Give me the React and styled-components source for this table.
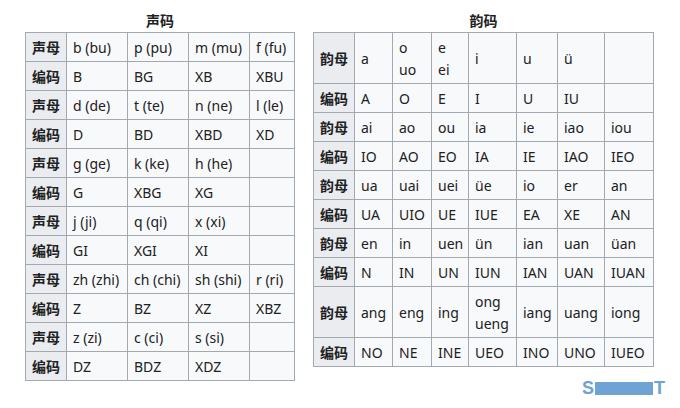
import React from "react";
import styled, { createGlobalStyle } from "styled-components";

const GlobalStyle = createGlobalStyle`
  html, body {
    margin: 0;
    padding: 0;
    background: #fff;
  }
  body {
    font-family: "Noto Sans", "Noto Sans CJK SC", sans-serif;
    color: #202122;
    font-size: 14px;
  }
`;

const shengRows = [
  ["b (bu)", "p (pu)", "m (mu)", "f (fu)"],
  ["B", "BG", "XB", "XBU"],
  ["d (de)", "t (te)", "n (ne)", "l (le)"],
  ["D", "BD", "XBD", "XD"],
  ["g (ge)", "k (ke)", "h (he)", ""],
  ["G", "XBG", "XG", ""],
  ["j (ji)", "q (qi)", "x (xi)", ""],
  ["GI", "XGI", "XI", ""],
  ["zh (zhi)", "ch (chi)", "sh (shi)", "r (ri)"],
  ["Z", "BZ", "XZ", "XBZ"],
  ["z (zi)", "c (ci)", "s (si)", ""],
  ["DZ", "BDZ", "XDZ", ""],
];

const yunRows = [
  ["a", ["o", "uo"], ["e", "ei"], "i", "u", "ü", ""],
  ["A", "O", "E", "I", "U", "IU", ""],
  ["ai", "ao", "ou", "ia", "ie", "iao", "iou"],
  ["IO", "AO", "EO", "IA", "IE", "IAO", "IEO"],
  ["ua", "uai", "uei", "üe", "io", "er", "an"],
  ["UA", "UIO", "UE", "IUE", "EA", "XE", "AN"],
  ["en", "in", "uen", "ün", "ian", "uan", "üan"],
  ["N", "IN", "UN", "IUN", "IAN", "UAN", "IUAN"],
  ["ang", "eng", "ing", ["ong", "ueng"], "iang", "uang", "iong"],
  ["NO", "NE", "INE", "UEO", "INO", "UNO", "IUEO"],
];

const Page = styled.div`
  position: relative;
  width: 680px;
  height: 408px;
  box-sizing: border-box;
  padding: 10px 0 0 25px;
  display: flex;
  align-items: flex-start;
  gap: 18px;
`;

const Block = styled.div`
  display: flex;
  flex-direction: column;
  align-items: center;
`;

const Caption = styled.div`
  font-weight: bold;
  line-height: 22px;
  height: 22px;
`;

const Table = styled.table`
  border-collapse: collapse;
  table-layout: fixed;
  width: ${({ $width }) => $width}px;
  background: #f8f9fa;
  border: 1px solid #a2a9b1;
`;

const Head = styled.th`
  background: #eaecf0;
  border: 1px solid #a2a9b1;
  font-weight: bold;
  text-align: center;
  padding: 4px 4px 2px;
  line-height: 22px;
  white-space: nowrap;
`;

const Cell = styled.td`
  border: 1px solid #a2a9b1;
  padding: 4px 5px 2px 6px;
  line-height: 22px;
  text-align: left;
  white-space: nowrap;
  font-weight: normal;
`;

const Watermark = styled.div`
  position: absolute;
  left: 582px;
  top: 378px;
  display: flex;
  align-items: center;
  font-family: "Liberation Sans", sans-serif;
  font-weight: bold;
  font-size: 18px;
  line-height: 20px;
  color: #6fa3d3;
`;

const Smear = styled.span`
  display: inline-block;
  width: 58px;
  height: 13px;
  background: #6fa3d3;
  margin: 0 1px;
`;

const renderCell = (v) =>
  Array.isArray(v) ? (
    <>
      {v[0]}
      <br />
      {v[1]}
    </>
  ) : (
    v
  );

const PinyinTable = ({ title, widths, rows, odd, even }) => (
  <Block>
    <Caption>{title}</Caption>
    <Table $width={widths.reduce((a, b) => a + b, 0) + 1}>
      <colgroup>
        {widths.map((w, i) => (
          <col key={i} style={{ width: w }} />
        ))}
      </colgroup>
      <tbody>
        {rows.map((row, i) => (
          <tr key={i}>
            <Head>{i % 2 === 0 ? odd : even}</Head>
            {row.map((v, j) => (
              <Cell key={j}>{renderCell(v)}</Cell>
            ))}
          </tr>
        ))}
      </tbody>
    </Table>
  </Block>
);

export default function App() {
  return (
    <>
      <GlobalStyle />
      <Page>
        <PinyinTable
          title="声码"
          widths={[41, 61, 61, 61, 45]}
          rows={shengRows}
          odd="声母"
          even="编码"
        />
        <PinyinTable
          title="韵码"
          widths={[41, 38, 39, 37, 48, 41, 47, 49]}
          rows={yunRows}
          odd="韵母"
          even="编码"
        />
        <Watermark>
          S<Smear />T
        </Watermark>
      </Page>
    </>
  );
}
